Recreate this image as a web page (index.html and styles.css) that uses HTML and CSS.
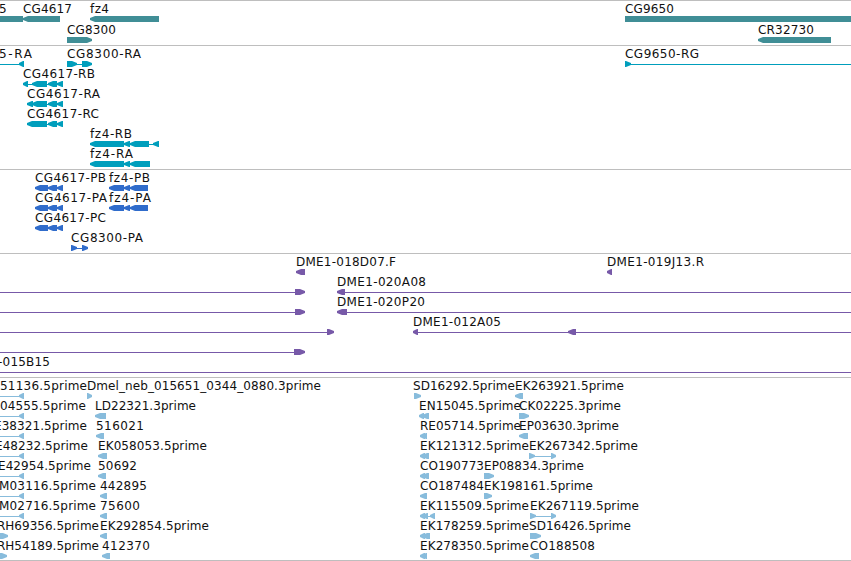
FILE: index.html
```html
<!DOCTYPE html>
<html lang="en">
<head>
<meta charset="utf-8">
<title>Genome browser</title>
<link rel="stylesheet" href="styles.css">
</head>
<body>
<main class="browser">
<svg class="track genes" height="45"></svg>
<svg class="track transcripts" height="124"></svg>
<svg class="track proteins" height="84"></svg>
<svg class="track clones" height="124"></svg>
<svg class="track ests" height="183"></svg>
</main>
<script src="tracks.js"></script>
</body>
</html>
```
FILE: styles.css
```css
body { margin: 0; background: #fff; overflow: hidden; }
.browser { display: flex; flex-direction: column; width: 851px; height: 561px; border-bottom: 1px solid #bebebe; box-sizing: border-box; }
.track { display: block; width: 851px; flex: none; box-sizing: border-box; border-top: 1px solid #bebebe; overflow: hidden; }
.label { font: 12px "DejaVu Sans", sans-serif; fill: #111; }
.feature { fill: currentColor; }
.genes { color: #408e96; }
.transcripts { color: #009ebc; }
.proteins { color: #306ccb; }
.clones { color: #7759a8; }
.ests { color: #88bcdc; }
```
FILE: tracks.js
```js
// Each row: baseline, labels [text, start, end], intron lines [start, end],
// exons [start, end, direction] where -1 points left, 1 right, 0 is a plain block.
const tracks = {
  genes: [
    [12, [["5", -1, 7], ["CG4617", 23, 72], ["fz4", 90, 109], ["CG9650", 625, 674]], [], [[-5, 23, 0], [23, 60, -1], [90, 159, -1], [625, 856, 0]]],
    [33, [["CG8300", 67, 116], ["CR32730", 758, 814]], [], [[67, 92, 1], [758, 831, -1]]]
  ],
  transcripts: [
    [12, [["5-RA", -1, 32], ["CG8300-RA", 67, 141], ["CG9650-RG", 625, 699]], [[0, 22], [72, 85], [627, 851]], [[19, 24, -1], [67, 77, 1], [82, 92, 1], [625, 631, 1]]],
    [32, [["CG4617-RB", 23, 95]], [[25, 60]], [[23, 28, -1], [32, 47, -1], [48, 57, -1], [57, 63, -1]]],
    [52, [["CG4617-RA", 27, 100]], [[29, 60]], [[27, 33, -1], [32, 47, -1], [48, 57, -1], [57, 63, -1]]],
    [72, [["CG4617-RC", 27, 99]], [[29, 60]], [[27, 47, -1], [48, 57, -1], [57, 63, -1]]],
    [92, [["fz4-RB", 90, 132]], [[93, 156]], [[90, 124, -1], [124, 130, -1], [130, 149, -1], [153, 159, -1]]],
    [112, [["fz4-RA", 90, 133]], [[93, 147]], [[90, 124, -1], [124, 130, -1], [130, 150, -1]]]
  ],
  proteins: [
    [12, [["CG4617-PB", 35, 106], ["fz4-PB", 109, 150]], [[38, 60], [112, 146]], [[35, 48, -1], [48, 57, -1], [57, 63, -1], [109, 124, -1], [124, 130, -1], [130, 148, -1]]],
    [32, [["CG4617-PA", 35, 107], ["fz4-PA", 109, 151]], [[38, 60], [112, 146]], [[35, 48, -1], [48, 57, -1], [57, 63, -1], [109, 124, -1], [124, 130, -1], [130, 148, -1]]],
    [52, [["CG4617-PC", 35, 106]], [[38, 60]], [[35, 48, -1], [48, 57, -1], [57, 63, -1]]],
    [72, [["CG8300-PA", 71, 143]], [[73, 86]], [[71, 77, 1], [82, 88, 1]]]
  ],
  clones: [
    [12, [["DME1-018D07.F", 296, 396], ["DME1-019J13.R", 607, 704]], [], [[296, 305, -1], [607, 612, -1]]],
    [32, [["DME1-020A08", 337, 426]], [[0, 303], [340, 851]], [[295, 305, 1], [337, 345, -1]]],
    [52, [["DME1-020P20", 337, 425]], [[0, 303], [340, 851]], [[295, 305, 1], [337, 347, -1]]],
    [72, [["DME1-012A05", 413, 501]], [[0, 332], [415, 851]], [[327, 334, 1], [413, 418, -1], [568, 576, -1]]],
    [92, [], [[0, 303]], [[294, 305, 1]]],
    [112, [["-015B15", -2, 50]], [[0, 851]], []]
  ],
  ests: [
    [12, [["51136.5prime", 0, 87], ["Dmel_neb_015651_0344_0880.3prime", 87, 321], ["SD16292.5prime", 413, 515], ["EK263921.5prime", 515, 624]], [[0, 22]], [[19, 24, -1], [87, 92, 1], [414, 421, 1], [515, 523, -1]]],
    [32, [["04555.5prime", 0, 86], ["LD22321.3prime", 95, 196], ["EN15045.5prime", 419, 521], ["CK02225.3prime", 519, 621]], [[0, 22]], [[19, 24, -1], [95, 106, -1], [419, 424, -1], [422, 429, -1], [519, 529, 1]]],
    [52, [["E38321.5prime", -6, 87], ["516021", 96, 144], ["RE05714.5prime", 420, 521], ["EP03630.3prime", 519, 619]], [[0, 22]], [[19, 24, -1], [96, 104, -1], [420, 425, -1], [422, 427, -1], [519, 528, -1]]],
    [72, [["E48232.5prime", -5, 88], ["EK058053.5prime", 98, 207], ["EK121312.5prime", 420, 529], ["EK267342.5prime", 529, 638]], [[0, 22], [531, 554]], [[19, 24, -1], [98, 107, -1], [420, 425, -1], [422, 429, -1], [529, 535, 1], [551, 556, 1]]],
    [92, [["E42954.5prime", -2, 91], ["50692", 98, 137], ["CO190773", 420, 484], ["EP08834.3prime", 484, 584]], [[0, 22]], [[19, 24, -1], [98, 106, -1], [420, 425, -1], [422, 429, -1], [484, 494, 1]]],
    [112, [["M03116.5prime", -1, 96], ["442895", 100, 147], ["CO187484", 420, 484], ["EK198161.5prime", 484, 593]], [[0, 22]], [[19, 24, -1], [100, 107, -1], [420, 427, -1], [484, 492, 1]]],
    [132, [["M02716.5prime", -1, 96], ["75600", 100, 140], ["EK115509.5prime", 420, 529], ["EK267119.5prime", 530, 639]], [[0, 22], [422, 434], [532, 554]], [[19, 24, -1], [100, 107, -1], [420, 425, -1], [422, 428, -1], [430, 435, -1], [530, 536, 1], [551, 556, 1]]],
    [152, [["RH69356.5prime", -3, 99], ["EK292854.5prime", 100, 209], ["EK178259.5prime", 420, 529], ["SD16426.5prime", 529, 631]], [], [[-5, 8, 1], [100, 107, -1], [420, 425, -1], [422, 430, -1], [530, 541, 1]]],
    [172, [["RH54189.5prime", -3, 99], ["412370", 102, 150], ["EK278350.5prime", 420, 529], ["CO188508", 530, 595]], [], [[-5, 7, 1], [102, 110, -1], [420, 425, -1], [422, 427, -1], [530, 539, -1]]]
  ]
};

const NS = "http://www.w3.org/2000/svg";
function add(svg, tag, attributes, text) {
  const node = document.createElementNS(NS, tag);
  for (const name in attributes) node.setAttribute(name, attributes[name]);
  if (text) node.textContent = text;
  svg.appendChild(node);
}

for (const name in tracks) {
  const svg = document.querySelector("." + name);
  for (const [y, labels, lines, exons] of tracks[name]) {
    const top = y + 3;
    for (const [a, b] of lines) {
      add(svg, "rect", { class: "feature", x: a, y: y + 6, width: b - a, height: 1 });
    }
    for (const [a, b, direction] of exons) {
      const head = Math.min(5, b - a - 1);
      if (direction === 0) {
        add(svg, "rect", { class: "feature", x: a, y: top, width: b - a, height: 6 });
      } else {
        const tip = direction < 0 ? a : b;
        const back = direction < 0 ? b : a;
        const neck = tip - direction * head;
        add(svg, "polygon", { class: "feature", points: `${back},${top} ${neck},${top} ${tip},${top + 2} ${tip},${top + 4} ${neck},${top + 6} ${back},${top + 6}` });
      }
    }
    for (const [text, a, b] of labels) {
      add(svg, "text", { class: "label", x: a, y: y, textLength: b - a, lengthAdjust: "spacing" }, text);
    }
  }
}
```
